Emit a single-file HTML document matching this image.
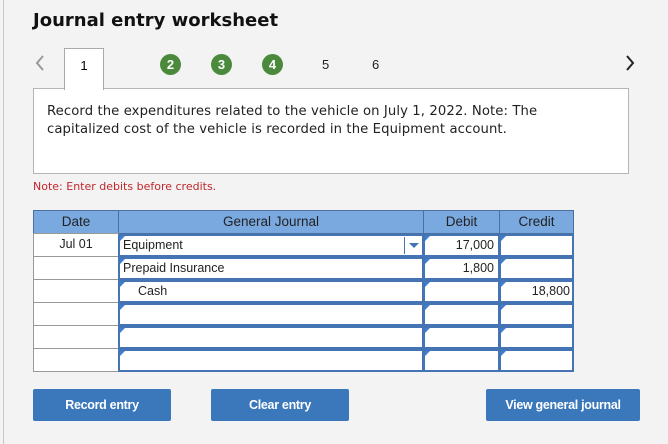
<!DOCTYPE html>
<html><head><style>
*{margin:0;padding:0;box-sizing:border-box}
body{width:668px;height:444px;background:#f3f3f3;position:relative;overflow:hidden;font-family:"DejaVu Sans","Liberation Sans",sans-serif}
.a{position:absolute}
.lb{left:3px;top:0;width:1px;height:444px;background:#c8c8c8}
h1{position:absolute;left:33px;top:10px;font-size:18px;font-weight:bold;color:#111;letter-spacing:0}
.tab{left:64px;top:48px;width:40px;height:42px;background:#fff;border:1px solid #aaa;border-bottom:none;z-index:2;text-align:center;font:13px "Liberation Sans",sans-serif;padding-top:9px}
.box{left:33px;top:88px;width:596px;height:86px;background:#fff;border:1px solid #b5b5b5;font-size:13.2px;color:#222;padding:14px 0 0 13px;line-height:18px;letter-spacing:0.1px}
.c{width:21px;height:21px;border-radius:50%;background:#4b8a3c;color:#fff;font:bold 13px "Liberation Sans",sans-serif;text-align:center;line-height:21px;top:54px}
.n{font:13px "Liberation Sans",sans-serif;top:57px;color:#222}
.note{left:33px;top:180px;font-size:11px;color:#c0272d}
.cell{position:absolute;font:12.5px "Liberation Sans",sans-serif;color:#222}
.hd{background:#7aa9e0;border:1px solid #4a6fa0;text-align:center;line-height:21px;font-size:13.5px}
.dt{background:#fff;border:1px solid #999;text-align:center;line-height:20px}
.in{background:#fff;border:2px solid #4474b4;line-height:18px}
.in:before{content:"";position:absolute;left:0;top:0;border-left:5px solid #3f7ed0;border-bottom:5px solid transparent}
.btn{position:absolute;top:389px;height:32px;background:#3a77bb;border-radius:2px;color:#fff;font:bold 12.5px "Liberation Sans",sans-serif;text-align:center;line-height:32px;letter-spacing:-0.3px}
</style></head><body>
<div class="a lb"></div>
<h1>Journal entry worksheet</h1>
<svg class="a" style="left:34px;top:54px" width="12" height="18"><path d="M9 2 L3 9 L9 16" fill="none" stroke="#999" stroke-width="2"/></svg>
<svg class="a" style="left:624px;top:54px" width="12" height="18"><path d="M3 2 L9 9 L3 16" fill="none" stroke="#222" stroke-width="2"/></svg>
<div class="a tab">1</div>
<div class="a c" style="left:160px">2</div>
<div class="a c" style="left:211px">3</div>
<div class="a c" style="left:262px">4</div>
<div class="a n" style="left:322px">5</div>
<div class="a n" style="left:372px">6</div>
<div class="a box">Record the expenditures related to the vehicle on July 1, 2022. Note: The<br>capitalized cost of the vehicle is recorded in the Equipment account.</div>
<div class="a note">Note: Enter debits before credits.</div>

<div class="cell hd" style="left:33px;top:210px;width:86px;height:24px">Date</div>
<div class="cell hd" style="left:118px;top:210px;width:306px;height:24px">General Journal</div>
<div class="cell hd" style="left:423px;top:210px;width:77px;height:24px">Debit</div>
<div class="cell hd" style="left:499px;top:210px;width:75px;height:24px">Credit</div>

<div class="cell dt" style="left:33px;top:233px;width:86px;height:24px">Jul 01</div>
<div class="cell dt" style="left:33px;top:256px;width:86px;height:24px"></div>
<div class="cell dt" style="left:33px;top:279px;width:86px;height:24px"></div>
<div class="cell dt" style="left:33px;top:302px;width:86px;height:24px"></div>
<div class="cell dt" style="left:33px;top:325px;width:86px;height:24px"></div>
<div class="cell dt" style="left:33px;top:348px;width:86px;height:24px"></div>

<div class="cell in" style="left:118px;top:234px;width:306px;height:23px;padding-left:3px">Equipment<span style="position:absolute;left:284px;top:1px;width:1px;height:17px;background:#4474b4"></span><span style="position:absolute;left:289px;top:7px;border-left:5px solid transparent;border-right:5px solid transparent;border-top:5px solid #4474b4"></span></div>
<div class="cell in" style="left:423px;top:234px;width:77px;height:23px;text-align:right;padding-right:4px">17,000</div>
<div class="cell in" style="left:499px;top:234px;width:75px;height:23px"></div>

<div class="cell in" style="left:118px;top:257px;width:306px;height:23px;padding-left:3px">Prepaid Insurance</div>
<div class="cell in" style="left:423px;top:257px;width:77px;height:23px;text-align:right;padding-right:4px">1,800</div>
<div class="cell in" style="left:499px;top:257px;width:75px;height:23px"></div>

<div class="cell in" style="left:118px;top:280px;width:306px;height:23px;padding-left:18px">Cash</div>
<div class="cell in" style="left:423px;top:280px;width:77px;height:23px"></div>
<div class="cell in" style="left:499px;top:280px;width:75px;height:23px;text-align:right;padding-right:2px">18,800</div>

<div class="cell in" style="left:118px;top:303px;width:306px;height:23px"></div>
<div class="cell in" style="left:423px;top:303px;width:77px;height:23px"></div>
<div class="cell in" style="left:499px;top:303px;width:75px;height:23px"></div>
<div class="cell in" style="left:118px;top:326px;width:306px;height:23px"></div>
<div class="cell in" style="left:423px;top:326px;width:77px;height:23px"></div>
<div class="cell in" style="left:499px;top:326px;width:75px;height:23px"></div>
<div class="cell in" style="left:118px;top:349px;width:306px;height:23px"></div>
<div class="cell in" style="left:423px;top:349px;width:77px;height:23px"></div>
<div class="cell in" style="left:499px;top:349px;width:75px;height:23px"></div>

<div class="btn" style="left:33px;width:138px">Record entry</div>
<div class="btn" style="left:211px;width:138px">Clear entry</div>
<div class="btn" style="left:486px;width:154px">View general journal</div>
</body></html>
